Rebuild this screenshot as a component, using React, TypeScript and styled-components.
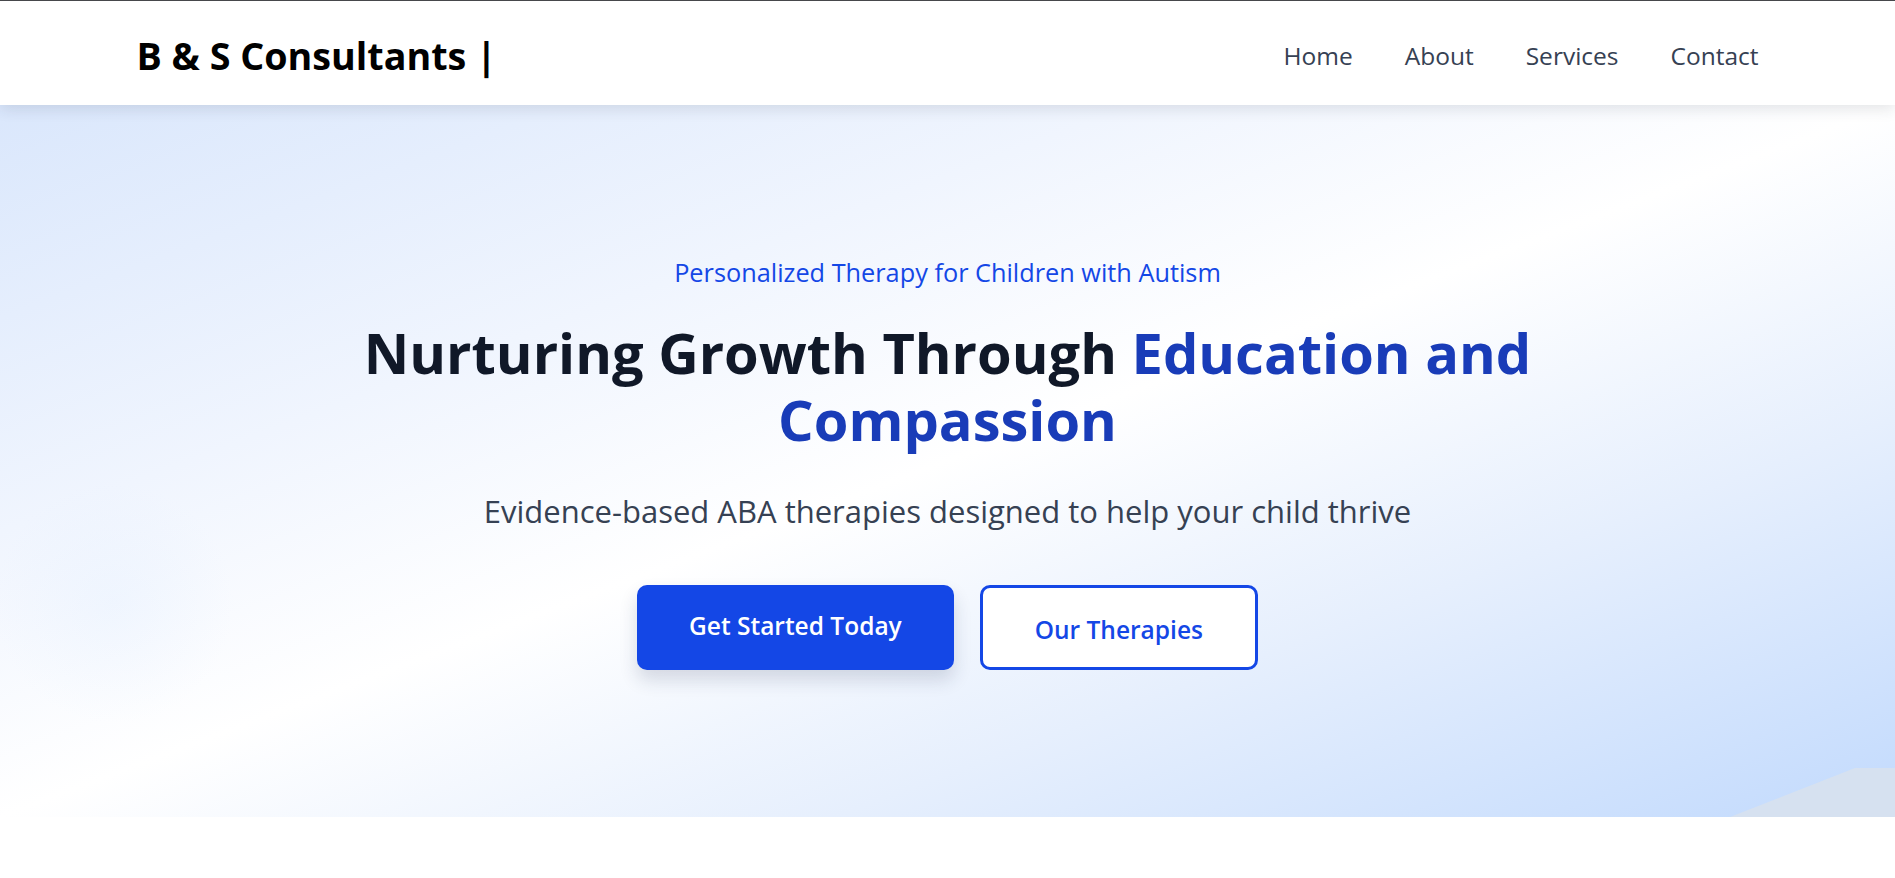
import React from 'react';
import styled, { createGlobalStyle } from 'styled-components';

const GlobalStyle = createGlobalStyle`
  * { box-sizing: border-box; }
  html, body {
    margin: 0;
    padding: 0;
    background: #ffffff;
    font-family: 'Open Sans', 'Noto Sans', Arial, sans-serif;
  }
  body { border-top: 1px solid #46474b; }
`;

const navLinks = ['Home', 'About', 'Services', 'Contact'];

export default function App() {
  return (
    <>
      <GlobalStyle />
      <Header>
        <HeaderInner>
          <Logo>B &amp; S Consultants |</Logo>
          <Nav>
            {navLinks.map((link) => (
              <NavLink key={link} href="#">
                {link}
              </NavLink>
            ))}
          </Nav>
        </HeaderInner>
      </Header>

      <Hero>
        <HeroContent>
          <Eyebrow>Personalized Therapy for Children with Autism</Eyebrow>
          <Title>
            Nurturing Growth Through <Accent>Education and</Accent> <Accent>Compassion</Accent>
          </Title>
          <Lead>Evidence-based ABA therapies designed to help your child thrive</Lead>
          <Actions>
            <Button $variant="primary">Get Started Today</Button>
            <Button $variant="outline">Our Therapies</Button>
          </Actions>
        </HeroContent>
        <CornerShape viewBox="0 0 165 49" preserveAspectRatio="none" aria-hidden="true">
          <polygon points="0,49 125,0 165,0 165,49" fill="#d6e1f0" />
        </CornerShape>
      </Hero>
    </>
  );
}

const Header = styled.header`
  position: relative;
  z-index: 10;
  height: 104px;
  background: #ffffff;
  box-shadow: 0 4px 14px rgba(30, 41, 59, 0.12);
`;

const HeaderInner = styled.div`
  max-width: 1622px;
  height: 100%;
  margin: 0 auto;
  display: flex;
  align-items: center;
  justify-content: space-between;
`;

const Logo = styled.div`
  font-size: 37.7px;
  font-weight: 700;
  color: #000000;
  padding-top: 4px;
`;

const Nav = styled.nav`
  display: flex;
  align-items: center;
  gap: 52px;
  padding-top: 4px;
`;

const NavLink = styled.a`
  font-size: 24.5px;
  color: #364153;
  text-decoration: none;
`;

const Hero = styled.section`
  position: relative;
  height: 712px;
  display: flex;
  align-items: center;
  justify-content: center;
  overflow: hidden;
  background:
    radial-gradient(circle at 6% 70%, rgba(219, 234, 254, 0.25) 0, rgba(219, 234, 254, 0) 120px),
    linear-gradient(to bottom right, #dae7fc 0%, #f0f5fe 30%, #ffffff 50%, #e6effd 72%, #c2dafd 100%);
`;

const HeroContent = styled.div`
  display: flex;
  flex-direction: column;
  align-items: center;
  text-align: center;
  margin-top: 5px;
`;

const Eyebrow = styled.p`
  margin: 0;
  font-size: 25.3px;
  font-weight: 500;
  line-height: 30px;
  color: #1447e6;
`;

const Title = styled.h1`
  margin: 32px 0 0;
  max-width: 1260px;
  font-size: 56px;
  font-weight: 700;
  line-height: 67px;
  color: #101828;
`;

const Accent = styled.span`
  color: #193cb8;
`;

const Lead = styled.p`
  margin: 36px 0 0;
  font-size: 31px;
  line-height: 44px;
  color: #364153;
`;

const Actions = styled.div`
  display: flex;
  gap: 26px;
  margin-top: 52px;
`;

const Button = styled.button<{ $variant: 'primary' | 'outline' }>`
  height: 85px;
  padding: ${(p) => (p.$variant === 'primary' ? '0 52px 4px' : '4px 52px 0')};
  border-radius: 10px;
  font-family: inherit;
  font-size: 24.5px;
  font-weight: 600;
  cursor: pointer;
  border: ${(p) => (p.$variant === 'primary' ? 'none' : '3px solid #1447e6')};
  background: ${(p) => (p.$variant === 'primary' ? '#1447e6' : '#ffffff')};
  color: ${(p) => (p.$variant === 'primary' ? '#ffffff' : '#1447e6')};
  box-shadow: ${(p) =>
    p.$variant === 'primary' ? '0 10px 18px rgba(30, 41, 80, 0.16)' : 'none'};
`;

const CornerShape = styled.svg`
  position: absolute;
  right: 0;
  bottom: 0;
  width: 165px;
  height: 49px;
`;
